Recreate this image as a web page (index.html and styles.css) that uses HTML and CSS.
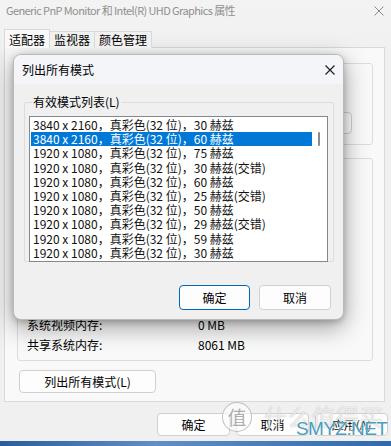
FILE: index.html
```
<!DOCTYPE html>
<html lang="zh-CN">
<head>
    <meta charset="UTF-8">
    <title>Generic PnP Monitor 和 Intel(R) UHD Graphics 属性</title>
    <link rel="stylesheet" href="styles.css">
</head>
<body>
    <div class="window">
        <!-- Title bar -->
        <div class="titlebar">
            <span class="win-title">Generic PnP Monitor 和 Intel(R) UHD Graphics 属性</span>
            <svg class="win-close" width="10" height="10" viewBox="0 0 10 10"><path d="M0.5 0.5 L9.5 9.5 M9.5 0.5 L0.5 9.5" stroke="#8a8a8a" stroke-width="1"/></svg>
        </div>

        <!-- Tabs -->
        <div class="tabs">
            <div class="tab active">适配器</div>
            <div class="tab">监视器</div>
            <div class="tab">颜色管理</div>
        </div>

        <!-- Adapter tab page -->
        <div class="panel">
            <div class="group group-type">
                <div class="type-row">
                    <span class="type-name">Intel(R) UHD</span>
                    <button class="btn btn-prop">属性(P)</button>
                </div>
            </div>
            <div class="group group-info">
                <div class="info-row"><span class="info-label">芯片类型:</span><span>Intel(R) UHD</span></div>
                <div class="info-row"><span class="info-label">DAC 类型:</span><span>Internal</span></div>
                <div class="info-row"><span class="info-label">适配器字符串:</span><span>Intel(R) UHD</span></div>
                <div class="info-row"><span class="info-label">BIOS 信息:</span><span>Intel Video</span></div>
                <div class="info-row"><span class="info-label">总可用图形内存:</span><span>8189 MB</span></div>
                <div class="info-row"><span class="info-label">专用视频内存:</span><span>128 MB</span></div>
                <div class="info-row"><span class="info-label">系统视频内存:</span><span>0 MB</span></div>
                <div class="info-row"><span class="info-label">共享系统内存:</span><span>8061 MB</span></div>
            </div>
            <button class="btn btn-list">列出所有模式(L)</button>
        </div>

        <div class="footer">
            <button class="btn btn-foot">确定</button>
            <button class="btn btn-foot">取消</button>
            <button class="btn btn-foot">应用(A)</button>
        </div>
        <div class="taskbar"></div>
    </div>

    <!-- Modal: list all modes -->
    <div class="dialog">
        <div class="dlg-titlebar">
            <span class="dlg-title">列出所有模式</span>
            <svg class="dlg-close" width="10" height="10" viewBox="0 0 10 10"><path d="M0.5 0.5 L9.5 9.5 M9.5 0.5 L0.5 9.5" stroke="#1a1a1a" stroke-width="1.1"/></svg>
        </div>
        <div class="dlg-body">
            <fieldset class="modes-group">
                <legend>有效模式列表(L)</legend>
                <div class="listbox">
                    <ul class="modes">
                        <li>3840 x 2160，真彩色(32 位)，30 赫兹</li>
                        <li class="selected">3840 x 2160，真彩色(32 位)，60 赫兹</li>
                        <li>1920 x 1080，真彩色(32 位)，75 赫兹</li>
                        <li>1920 x 1080，真彩色(32 位)，30 赫兹(交错)</li>
                        <li>1920 x 1080，真彩色(32 位)，60 赫兹</li>
                        <li>1920 x 1080，真彩色(32 位)，25 赫兹(交错)</li>
                        <li>1920 x 1080，真彩色(32 位)，50 赫兹</li>
                        <li>1920 x 1080，真彩色(32 位)，29 赫兹(交错)</li>
                        <li>1920 x 1080，真彩色(32 位)，59 赫兹</li>
                        <li>1920 x 1080，真彩色(32 位)，30 赫兹</li>
                    </ul>
                    <div class="scrollbar"><div class="thumb"></div></div>
                </div>
            </fieldset>
            <div class="dlg-buttons">
                <button class="btn btn-dlg default">确定</button>
                <button class="btn btn-dlg">取消</button>
            </div>
        </div>
    </div>

    <!-- Watermark -->
    <div class="watermark">
        <span class="wm-badge">值</span>
        <span class="wm-text">什么值得买</span>
        <span class="wm-site">SMYZ.NET</span>
    </div>
</body>
</html>
```

FILE: styles.css
```
body {
    margin: 0;
    padding: 0;
    width: 391px;
    height: 446px;
    overflow: hidden;
    position: relative;
    background: #f0f0f0;
    font-family: "Noto Sans CJK SC", "Noto Sans", sans-serif;
    font-size: 12px;
    color: #000;
}

button {
    font-family: inherit;
    font-size: 12px;
    color: #000;
}

.window {
    height: 446px;
    display: flex;
    flex-direction: column;
    background: linear-gradient(#f3f3f3, #f0f0f0 60px);
}

/* Title bar */
.titlebar {
    height: 30px;
    display: flex;
    justify-content: space-between;
    align-items: flex-start;
    padding: 2px 7px 0 6px;
    box-sizing: border-box;
}

.win-title {
    color: #8f8f8f;
    font-size: 11px;
    line-height: 16px;
    letter-spacing: -0.6px;
}

.win-close {
    margin-top: 4px;
}

/* Tabs */
.tabs {
    display: flex;
    height: 17px;
    padding-left: 4px;
    position: relative;
    z-index: 1;
}

.tab {
    height: 16px;
    margin-top: 1px;
    padding: 0 4px;
    line-height: 16px;
    border: 1px solid #d9d9d9;
    border-bottom: none;
    border-left: none;
    background: #f0f0f0;
}

.tab.active {
    height: 18px;
    margin-top: -1px;
    border-left: 1px solid #d9d9d9;
    background: #f9f9f9;
    line-height: 20px;
}

.panel {
    margin: 0 6px 0 4px;
    height: 355px;
    box-sizing: border-box;
    border: 1px solid #d9d9d9;
    background: #f9f9f9;
    padding: 15px 11px 0 12px;
    display: flex;
    flex-direction: column;
}

.group {
    border: 1px solid #dcdcdc;
    border-radius: 3px;
}

.group-type {
    height: 82px;
    box-sizing: border-box;
}

.type-row {
    display: flex;
    justify-content: space-between;
    align-items: flex-start;
    padding: 48px 20px 0 40px;
}

.btn {
    background: #fdfdfd;
    border: 1px solid #d0d0d0;
    border-radius: 4px;
    padding: 0;
}

.btn-prop {
    width: 75px;
    height: 22px;
}

.group-info {
    margin-top: 13px;
    height: 203px;
    box-sizing: border-box;
    padding: 36px 0 0 9px;
}

.info-row {
    display: flex;
    height: 20px;
    line-height: 20px;
}

.info-label {
    width: 171px;
}

.btn-list {
    margin: 9px 0 0 2px;
    width: 137px;
    height: 23px;
    align-self: flex-start;
}

.footer {
    display: flex;
    gap: 6px;
    padding: 11px 0 0 157px;
}

.btn-foot {
    width: 73px;
    height: 23px;
}

.taskbar {
    margin-top: auto;
    height: 5px;
    background: linear-gradient(90deg, #2a5d9c, #5f8fc7 40%, #2f69ad);
}

/* Dialog */
.dialog {
    position: absolute;
    left: 13px;
    top: 54px;
    width: 331px;
    height: 266px;
    box-sizing: border-box;
    border: 1px solid #b9b9b9;
    border-radius: 8px;
    background: #f0f0f0;
    overflow: hidden;
    box-shadow: 0 7px 24px rgba(0,0,0,0.38), 0 2px 6px rgba(0,0,0,0.2);
}

.dlg-titlebar {
    height: 29px;
    display: flex;
    justify-content: space-between;
    align-items: center;
    padding: 0 8px;
    background: #f3f5f9;
}

.dlg-title {
    line-height: 16px;
}

.dlg-body {
    padding: 11px 9px 0 10px;
}

.modes-group {
    margin: 0;
    padding: 7px 5px 5px 4px;
    border: 1px solid #dcdcdc;
    border-radius: 2px;
    height: 167px;
    box-sizing: border-box;
}

.modes-group legend {
    padding: 0 1px;
    margin-left: 3px;
    line-height: 14px;
}

.listbox {
    display: flex;
    border: 1px solid #828790;
    background: #fff;
    height: 146px;
    box-sizing: border-box;
}

.modes {
    list-style: none;
    margin: 0;
    padding: 1px 0 0 1px;
    flex: 1;
}

.modes li {
    height: 14.2px;
    line-height: 14.2px;
    padding-left: 2px;
    white-space: nowrap;
    color: #111;
}

.modes li.selected {
    background: #0078d7;
    color: #fff;
}

.scrollbar {
    width: 15px;
    position: relative;
}

.thumb {
    position: absolute;
    left: 6px;
    top: 15px;
    width: 2px;
    height: 14px;
    background: #8a8a8a;
    border-radius: 1px;
}

.dlg-buttons {
    display: flex;
    justify-content: flex-end;
    gap: 9px;
    margin-top: 23px;
    padding-right: 3px;
}

.btn-dlg {
    width: 72px;
    height: 25px;
}

.btn-dlg.default {
    width: 71px;
    border-color: #0067c0;
}

/* Watermark */
.watermark {
    position: absolute;
    left: 222px;
    top: 402px;
    width: 165px;
    height: 40px;
    pointer-events: none;
}

.wm-badge {
    position: absolute;
    left: 0;
    top: 0;
    width: 28px;
    height: 28px;
    border: 1.5px solid rgba(140,140,140,0.55);
    border-radius: 50%;
    background: rgba(255,255,255,0.6);
    color: rgba(140,140,140,0.7);
    font-size: 19px;
    line-height: 28px;
    text-align: center;
}

.wm-text {
    position: absolute;
    left: 42px;
    top: 0;
    font-size: 23px;
    line-height: 28px;
    letter-spacing: 1px;
    color: rgba(255,255,255,0.75);
    text-shadow: 0 0 1px rgba(120,120,120,0.6);
}

.wm-site {
    position: absolute;
    left: 74px;
    top: 16px;
    font-family: "Liberation Sans", sans-serif;
    font-size: 19px;
    line-height: 21px;
    letter-spacing: -0.6px;
    color: #4a9fbc;
    text-shadow: 0 0 2px #fff;
}
```
